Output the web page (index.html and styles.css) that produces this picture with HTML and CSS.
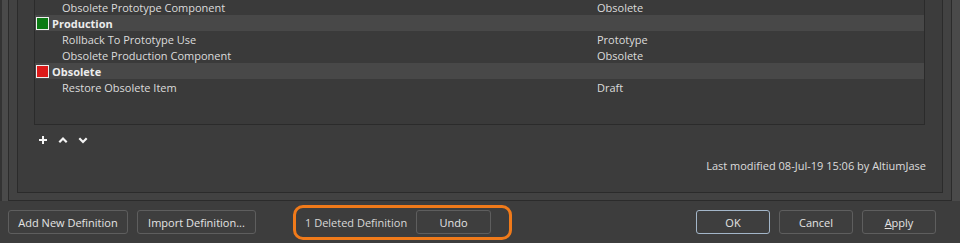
FILE: index.html
```html
<!DOCTYPE html>
<html>
<head>
<meta charset="utf-8">
<link rel="stylesheet" href="styles.css">
</head>
<body>
<div class="outer">
  <div class="frame">
    <div class="panel">
      <div class="table">
        <div class="row first"><span class="name">Obsolete Prototype Component</span><span class="val">Obsolete</span></div>
        <div class="row group"><span class="swatch green"></span><span class="glabel">Production</span></div>
        <div class="row"><span class="name">Rollback To Prototype Use</span><span class="val">Prototype</span></div>
        <div class="row"><span class="name">Obsolete Production Component</span><span class="val">Obsolete</span></div>
        <div class="row group"><span class="swatch red"></span><span class="glabel">Obsolete</span></div>
        <div class="row"><span class="name">Restore Obsolete Item</span><span class="val">Draft</span></div>
      </div>
      <div class="tools">
        <svg class="ico" width="10" height="10" viewBox="0 0 10 10"><path d="M5 1V9M1 5H9" stroke="#f4f4f4" stroke-width="2" fill="none"/></svg>
        <svg class="ico" width="10" height="10" viewBox="0 0 10 10"><path d="M1.3 7.2L5 3.5L8.7 7.2" stroke="#f4f4f4" stroke-width="2.2" fill="none"/></svg>
        <svg class="ico" width="10" height="10" viewBox="0 0 10 10"><path d="M1.3 3.3L5 7L8.7 3.3" stroke="#f4f4f4" stroke-width="2.2" fill="none"/></svg>
      </div>
      <div class="modified">Last modified 08-Jul-19 15:06 by AltiumJase</div>
    </div>
  </div>
</div>
<div class="bar">
  <div class="left">
    <button class="btn wide">Add New Definition</button>
    <button class="btn wide">Import Definition...</button>
    <div class="undo-box">
      <span class="deleted">1 Deleted Definition</span>
      <button class="btn undo">Undo</button>
    </div>
  </div>
  <div class="right">
    <button class="btn std ok">OK</button>
    <button class="btn std">Cancel</button>
    <button class="btn std"><u>A</u>pply</button>
  </div>
</div>
</body>
</html>
```

FILE: styles.css
```css
* { box-sizing: border-box; }
html, body {
  margin: 0;
  padding: 0;
}
body {
  width: 960px;
  height: 243px;
  overflow: hidden;
  background: #3d3d3d;
  font-family: "Open Sans", "Noto Sans", sans-serif;
  font-size: 11px;
  color: #dcdcdc;
}
.outer {
  height: 201px;
  background: #4a4a4a;
  border-left: 2px solid #333333;
  padding: 0 8px 0 6px;
}
.frame {
  height: 201px;
  background: #424242;
  border: 1px solid #2b2b2b;
  border-top: none;
  padding: 0 8px 7px 8px;
}
.panel {
  height: 193px;
  background: #3c3c3c;
  border: 1px solid #2b2b2b;
  border-top: none;
  padding: 0 16px 0 16px;
  display: flex;
  flex-direction: column;
}
.table {
  height: 125px;
  background: #3a3a3a;
  border: 1px solid #2b2b2b;
  border-top: none;
  margin-right: 1px;
}
.row {
  height: 16px;
  display: flex;
  align-items: center;
  line-height: 15px;
}
.row.first { height: 15px; }
.row.group { background: #484848; }
.name {
  padding-left: 27px;
  width: 562px;
  white-space: nowrap;
}
.val { white-space: nowrap; }
.swatch {
  width: 13px;
  height: 13px;
  margin-left: 1px;
  border: 1px solid #f0f0f0;
}
.swatch.green { background: #0b7a14; }
.swatch.red { background: #dd1a1a; }
.glabel {
  margin-left: 3px;
  font-weight: bold;
  color: #ececec;
}
.tools {
  display: flex;
  gap: 10px;
  padding-left: 4px;
  margin-top: 10px;
  height: 10px;
}
.ico { display: block; }
.modified {
  text-align: right;
  margin-top: 13px;
  color: #dcdcdc;
}
.bar {
  display: flex;
  justify-content: space-between;
  align-items: center;
  height: 42px;
  padding: 0 24px 0 8px;
}
.left, .right {
  display: flex;
  align-items: center;
}
.btn {
  font-family: inherit;
  font-size: 11px;
  color: #e4e4e4;
  background: #3e3e3e;
  border: 1px solid #5e5e5e;
  border-radius: 3px;
  height: 24px;
  padding: 0;
}
.wide { width: 120px; margin-right: 9px; }
.wide + .wide { width: 119px; }
.undo-box {
  margin-left: 28px;
  width: 219px;
  height: 35px;
  border: 3px solid #f07a1a;
  border-radius: 10px;
  display: flex;
  align-items: center;
  padding-left: 9px;
}
.deleted { width: 111px; color: #d8d8d8; }
.undo { width: 75px; }
.std { width: 74px; margin-left: 9px; }
.ok { border-color: #a3b6c9; margin-left: 0; }
u { text-decoration: underline; }
```
